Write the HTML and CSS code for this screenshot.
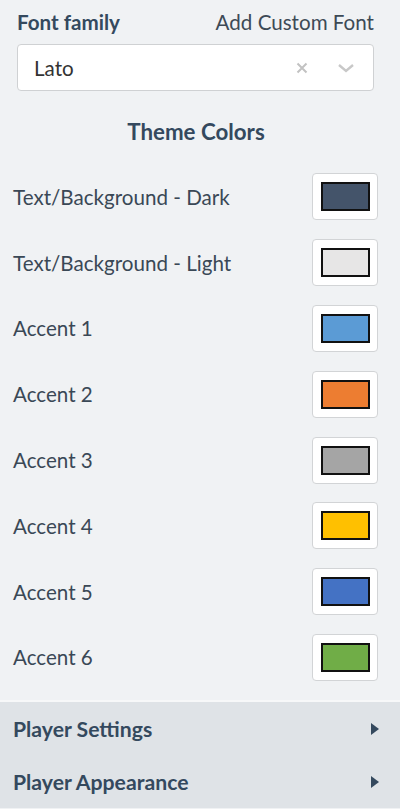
FILE: index.html
```html
<!DOCTYPE html>
<html lang="en">
  <head>
    <meta charset="UTF-8" />
    <meta name="viewport" content="width=device-width, initial-scale=1.0" />
    <title>Theme Settings</title>
    <link rel="stylesheet" href="styles.css">
  </head>
  <body class="body">
    <div class="font__section">
      <div class="font__header">
        <span class="font__title">Font family</span>
        <span class="font__custom">Add Custom Font</span>
      </div>
      <div class="select">
        <span class="select__value">Lato</span>
        <span class="select__clear">
          <svg width="12" height="12" viewBox="0 0 12 12">
            <path d="M1.5 1.5 L10.5 10.5 M10.5 1.5 L1.5 10.5" stroke="#c2c2c2" stroke-width="2" fill="none" />
          </svg>
        </span>
        <span class="select__arrow">
          <svg width="18" height="12" viewBox="0 0 18 12">
            <path d="M2 3 L9 9 L16 3" stroke="#c8c8c8" stroke-width="2.4" fill="none" />
          </svg>
        </span>
      </div>
    </div>
    <h2 class="colors__title">Theme Colors</h2>
    <ul class="colors">
      <li class="colors__row">
        <span class="colors__label">Text/Background - Dark</span>
        <button class="swatch"><span class="swatch__color swatch__color_dark"></span></button>
      </li>
      <li class="colors__row">
        <span class="colors__label">Text/Background - Light</span>
        <button class="swatch"><span class="swatch__color swatch__color_light"></span></button>
      </li>
      <li class="colors__row">
        <span class="colors__label">Accent 1</span>
        <button class="swatch"><span class="swatch__color swatch__color_a1"></span></button>
      </li>
      <li class="colors__row">
        <span class="colors__label">Accent 2</span>
        <button class="swatch"><span class="swatch__color swatch__color_a2"></span></button>
      </li>
      <li class="colors__row">
        <span class="colors__label">Accent 3</span>
        <button class="swatch"><span class="swatch__color swatch__color_a3"></span></button>
      </li>
      <li class="colors__row">
        <span class="colors__label">Accent 4</span>
        <button class="swatch"><span class="swatch__color swatch__color_a4"></span></button>
      </li>
      <li class="colors__row">
        <span class="colors__label">Accent 5</span>
        <button class="swatch"><span class="swatch__color swatch__color_a5"></span></button>
      </li>
      <li class="colors__row">
        <span class="colors__label">Accent 6</span>
        <button class="swatch"><span class="swatch__color swatch__color_a6"></span></button>
      </li>
    </ul>
    <div class="panels">
      <div class="panels__item">
        <span>Player Settings</span>
        <span class="panels__arrow"></span>
      </div>
      <div class="panels__item">
        <span>Player Appearance</span>
        <span class="panels__arrow"></span>
      </div>
    </div>
  </body>
</html>
```

FILE: styles.css
```css
.body {
  margin: 0;
  background-color: #f0f2f4;
  font-family: "Lato", "Liberation Sans", sans-serif;
  color: #3a4856;
}
.font__section {
  padding: 11px 26px 0 17px;
}
.font__header {
  display: flex;
  justify-content: space-between;
  align-items: center;
  font-size: 20.6px;
  line-height: 22px;
}
.font__title {
  font-weight: bold;
  color: #34495e;
}
.font__custom {
  color: #3d4a56;
}
.select {
  display: flex;
  align-items: center;
  height: 45px;
  margin-top: 11px;
  background-color: white;
  border: 1px solid #cfd1d3;
  border-radius: 4px;
}
.select__value {
  flex: 1;
  padding-left: 16px;
  font-size: 20.6px;
  color: #333;
}
.select__clear {
  display: flex;
  width: 20px;
  justify-content: center;
  margin-right: 24px;
}
.select__arrow {
  display: flex;
  width: 20px;
  justify-content: center;
  margin-right: 17px;
}
.colors__title {
  margin: 30px 0 0 0;
  padding-right: 8px;
  text-align: center;
  font-size: 22.3px;
  line-height: 22px;
  color: #34495e;
}
.colors {
  list-style: none;
  margin: 21px 0 0 0;
  padding: 0 22px 10px 13px;
}
.colors__row {
  display: flex;
  justify-content: space-between;
  align-items: center;
  height: 65.8px;
}
.colors__label {
  font-size: 20.6px;
  color: #3a4856;
}
.swatch {
  display: flex;
  justify-content: center;
  align-items: center;
  width: 66px;
  height: 47px;
  padding: 0;
  background-color: white;
  border: 1px solid #d2d4d6;
  border-radius: 4px;
}
.swatch__color {
  display: block;
  width: 45px;
  height: 25px;
  border: 2px solid #111;
}
.swatch__color_dark {
  background-color: #44546a;
}
.swatch__color_light {
  background-color: #e7e6e6;
}
.swatch__color_a1 {
  background-color: #5b9bd5;
}
.swatch__color_a2 {
  background-color: #ed7d31;
}
.swatch__color_a3 {
  background-color: #a5a5a5;
}
.swatch__color_a4 {
  background-color: #ffc000;
}
.swatch__color_a5 {
  background-color: #4472c4;
}
.swatch__color_a6 {
  background-color: #70ad47;
}
.panels {
  border-top: 2px solid #f7f8f9;
  background-color: #dfe3e7;
}
.panels__item {
  display: flex;
  justify-content: space-between;
  align-items: center;
  height: 53px;
  padding: 0 21px 0 13px;
  font-size: 21.2px;
  font-weight: bold;
  color: #34495e;
}
.panels__arrow {
  width: 0;
  height: 0;
  border-top: 6px solid transparent;
  border-bottom: 6px solid transparent;
  border-left: 8px solid #34495e;
}
```
